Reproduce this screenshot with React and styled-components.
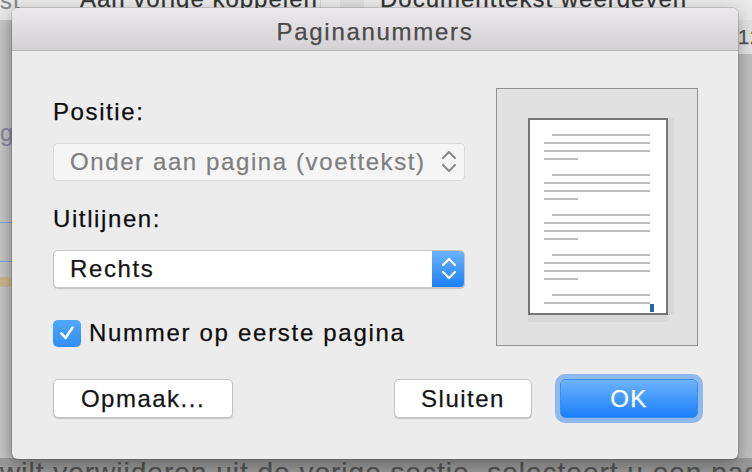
import React from 'react'
import styled, { createGlobalStyle } from 'styled-components'

const GlobalStyle = createGlobalStyle`
  html, body {
    margin: 0;
    padding: 0;
    background: #c2c2c2;
  }
  body {
    font-family: 'Liberation Sans', Arial, sans-serif;
    -webkit-text-stroke: 0.25px currentColor;
  }
`

const Screen = styled.div`
  position: relative;
  width: 752px;
  height: 472px;
  overflow: hidden;
  background: linear-gradient(#c9c9c9, #b9b9b9);
  padding: 8px 14px 13px 12px;
  box-sizing: border-box;
`

// the Word window behind the sheet
const Behind = styled.div`
  position: absolute;
  left: ${(p) => p.$x}px;
  top: ${(p) => p.$y}px;
  width: ${(p) => p.$w}px;
  height: ${(p) => p.$h}px;
  background: ${(p) => p.$bg || 'transparent'};
  color: ${(p) => p.$color || '#333'};
  font-size: ${(p) => p.$size || 24}px;
  line-height: ${(p) => p.$h}px;
  letter-spacing: 1px;
  white-space: nowrap;
  overflow: hidden;
  border-right: ${(p) => (p.$sep ? '1px solid #cfcfcf' : 'none')};
`

const Dialog = styled.div`
  position: relative;
  width: 726px;
  height: 451px;
  background: #ececec;
  border-radius: 6px;
  box-shadow: 0 0 0 1px rgba(0, 0, 0, 0.12), 0 6px 18px rgba(0, 0, 0, 0.35);
  display: flex;
  flex-direction: column;
  overflow: hidden;
`

const TitleBar = styled.div`
  height: 43px;
  box-sizing: border-box;
  border-bottom: 1px solid #b3b3b3;
  background: linear-gradient(#ebe9eb, #d3d1d3);
  color: #4a4a4a;
  font-size: 24px;
  letter-spacing: 1.7px;
  line-height: 28px;
  padding-top: 10px;
  text-align: center;
`

const Body = styled.div`
  padding: 37px 40px 0 41px;
  display: flex;
  flex-direction: column;
`

const TopRow = styled.div`
  display: flex;
  gap: 31px;
`

const Form = styled.div`
  width: 412px;
  display: flex;
  flex-direction: column;
`

const Label = styled.div`
  font-size: 24px;
  letter-spacing: 1.6px;
  line-height: 28px;
  color: #0d0d0d;
  margin-top: ${(p) => p.$top}px;
  margin-bottom: 17px;
`

const Popup = styled.div`
  height: 38px;
  border-radius: 5px;
  box-sizing: border-box;
  display: flex;
  align-items: center;
  background: ${(p) => (p.$disabled ? '#f5f5f5' : '#fff')};
  border: 1px solid ${(p) => (p.$disabled ? '#d9d9d9' : '#c6c6c6')};
  box-shadow: ${(p) => (p.$disabled ? 'none' : '0 1px 1px rgba(0,0,0,0.18)')};
  overflow: hidden;
`

const PopupText = styled.span`
  flex: 1;
  padding-left: 16px;
  font-size: 24px;
  letter-spacing: 1.6px;
  color: ${(p) => (p.$disabled ? '#7f7f7f' : '#141414')};
`

const Stepper = styled.div`
  width: 33px;
  align-self: stretch;
  margin: -1px -1px -1px 0;
  display: flex;
  align-items: center;
  justify-content: center;
  background: ${(p) => (p.$active ? 'linear-gradient(#6db5fb, #1a7ffa)' : 'transparent')};
  border-radius: 0 5px 5px 0;
`

const CheckRow = styled.label`
  margin-top: 31px;
  display: flex;
  align-items: center;
  gap: 8px;
  font-size: 24px;
  letter-spacing: 1.7px;
  color: #0d0d0d;
`

const Box = styled.span`
  width: 28px;
  height: 27px;
  border-radius: 5px;
  background: linear-gradient(#4fa6fc, #2f8ff8);
  display: flex;
  align-items: center;
  justify-content: center;
`

const Preview = styled.div`
  width: 202px;
  height: 258px;
  box-sizing: border-box;
  background: #e1e1e1;
  border: 1px solid #919191;
  padding: 29px 0 0 31px;
`

const Page = styled.div`
  width: 140px;
  height: 197px;
  box-sizing: border-box;
  background: #fff;
  border: 2px solid #767676;
  box-shadow: 6px 0 0 #d7d7d7, 0 7px 0 #d8d8d8;
`

const Buttons = styled.div`
  margin-top: 32px;
  display: flex;
  align-items: center;
`

const Button = styled.button`
  width: ${(p) => p.$w}px;
  height: 39px;
  margin-left: ${(p) => p.$gap || 0}px;
  border-radius: 5px;
  box-sizing: border-box;
  font-family: 'Liberation Sans', Arial, sans-serif;
  font-size: 24px;
  letter-spacing: 1.5px;
  padding: 0;
  cursor: default;
  color: ${(p) => (p.$primary ? '#fff' : '#141414')};
  background: ${(p) => (p.$primary ? 'linear-gradient(#6cb3fb, #1a7ff9)' : '#fff')};
  border: 1px solid ${(p) => (p.$primary ? '#3a8ef0' : '#c4c4c4')};
  box-shadow: ${(p) =>
    p.$primary
      ? '0 0 0 5px rgba(110, 168, 240, 0.75)'
      : '0 1px 1px rgba(0, 0, 0, 0.18)'};
`

const Spacer = styled.div`
  flex: 1;
`

const Chevrons = ({ color }) => (
  <svg width="16" height="26" viewBox="0 0 16 26">
    <path d="M2 9 L8 3 L14 9" fill="none" stroke={color} strokeWidth="2.2" strokeLinecap="round" strokeLinejoin="round" />
    <path d="M2 16 L8 22 L14 16" fill="none" stroke={color} strokeWidth="2.2" strokeLinecap="round" strokeLinejoin="round" />
  </svg>
)

const paragraphs = [14, 54, 94, 134]

const PageLines = () => (
  <svg width="136" height="193" viewBox="0 0 136 193">
    {paragraphs.map((y) => (
      <g key={y} fill="#bcbcbc">
        <rect x="22" y={y} width="98" height="2" />
        <rect x="14" y={y + 8} width="106" height="2" />
        <rect x="14" y={y + 16} width="106" height="2" />
        <rect x="14" y={y + 24} width="34" height="2" />
      </g>
    ))}
    <rect x="22" y="174" width="98" height="2" fill="#bcbcbc" />
    <rect x="14" y="182" width="106" height="2" fill="#bcbcbc" />
    <rect x="120" y="184" width="4" height="8" fill="#2d63a6" />
  </svg>
)

const App = () => {
  return (
    <>
      <GlobalStyle />
      <Screen>
        <Behind $x={0} $y={0} $w={752} $h={20} $bg="#e9e9e9" />
        <Behind $x={0} $y={-12} $w={30} $h={26} $color="#8a8a8a">st</Behind>
        <Behind $x={80} $y={-14} $w={240} $h={26} $sep>Aan vorige koppelen</Behind>
        <Behind $x={38} $y={10} $w={26} $h={4} $bg="#5b95d8" />
        <Behind $x={340} $y={-10} $w={24} $h={20} $bg="#dedede" />
        <Behind $x={380} $y={-14} $w={330} $h={26}>Documenttekst weergeven</Behind>
        <Behind $x={0} $y={20} $w={12} $h={440} $bg="linear-gradient(90deg,#c8c8c8,#bdbdbd)" />
        <Behind $x={0} $y={120} $w={12} $h={26} $color="#8a8a9a">ge</Behind>
        <Behind $x={0} $y={222} $w={12} $h={1} $bg="#7ea7dd" />
        <Behind $x={0} $y={261} $w={12} $h={1} $bg="#7ea7dd" />
        <Behind $x={0} $y={277} $w={12} $h={10} $bg="#c8b78e" />
        <Behind $x={738} $y={20} $w={14} $h={34} $bg="#e3e3e3" $color="#555" $size={20}>12</Behind>
        <Behind $x={738} $y={54} $w={14} $h={410} $bg="#c0c0c0" />
        <Behind $x={0} $y={458} $w={752} $h={30} $bg="#9b9b9b" $color="#555" $size={28}>
          wilt verwijderen uit de vorige sectie, selecteert u een pagina
        </Behind>
        <Dialog>
          <TitleBar>Paginanummers</TitleBar>
          <Body>
            <TopRow>
              <Form>
                <Label $top={10}>Positie:</Label>
                <Popup $disabled>
                  <PopupText $disabled>Onder aan pagina (voettekst)</PopupText>
                  <Stepper>
                    <Chevrons color="#8c8c8c" />
                  </Stepper>
                </Popup>
                <Label $top={24}>Uitlijnen:</Label>
                <Popup>
                  <PopupText>Rechts</PopupText>
                  <Stepper $active>
                    <Chevrons color="#fff" />
                  </Stepper>
                </Popup>
                <CheckRow>
                  <Box>
                    <svg width="18" height="18" viewBox="0 0 18 18">
                      <path d="M3.5 9.5 L7.5 14 L14.5 3.5" fill="none" stroke="#fff" strokeWidth="2.6" strokeLinecap="round" strokeLinejoin="round" />
                    </svg>
                  </Box>
                  Nummer op eerste pagina
                </CheckRow>
              </Form>
              <Preview>
                <Page>
                  <PageLines />
                </Page>
              </Preview>
            </TopRow>
            <Buttons>
              <Button $w={180}>Opmaak...</Button>
              <Spacer />
              <Button $w={138}>Sluiten</Button>
              <Button $w={138} $gap={28} $primary>OK</Button>
            </Buttons>
          </Body>
        </Dialog>
      </Screen>
    </>
  )
}

export default App
